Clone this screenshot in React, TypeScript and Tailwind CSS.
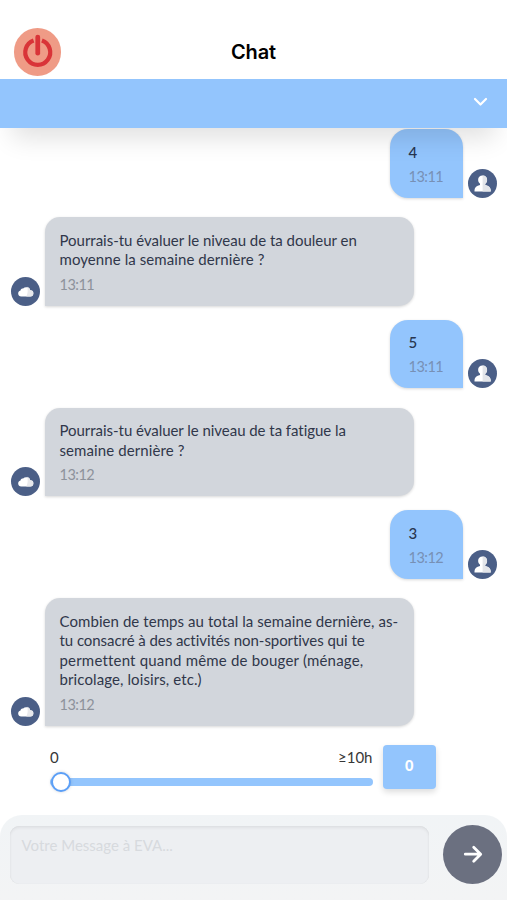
import type { ReactNode } from "react";

function Avatar({ children }: { children: ReactNode }) {
  return (
    <div className="h-[29px] w-[29px] shrink-0 rounded-full bg-[#4b5f87]">
      <svg viewBox="0 0 29 29" className="block h-full w-full">
        {children}
      </svg>
    </div>
  );
}

function BotMessage({ lines, time, spacing }: { lines: string[]; time: string; spacing: string[] }) {
  return (
    <div className="flex items-end gap-[5px] pl-[11px]">
      <Avatar>
        <path d="M10.2 19.5a3.1 3.1 0 0 1-.7-6.1c.3-1.2 1.3-1.9 2.6-1.8a4.2 4.2 0 0 1 7.2 1.6 3.15 3.15 0 0 1-.2 6.3z" fill="#fff" />
        <path d="M16.3 9.7a4.2 4.2 0 0 1 3 3.5 3.15 3.15 0 0 1-.2 6.3h-3.8q2.2-4.2 1-9.8z" fill="#e8e9ec" />
      </Avatar>
      <div className="w-[369px] rounded-t-[15px] rounded-br-[15px] bg-[#d2d6dc] pt-[13.5px] pb-[10.5px] pl-[14.5px] shadow-[0_1px_3px_rgba(0,0,0,0.16)]">
        {lines.map((line, i) => (
          <p key={line} className="text-[15px] leading-[19.5px] whitespace-nowrap text-[#30374a] [font-variant-ligatures:none]" style={{ letterSpacing: spacing[i] }}>
            {line}
          </p>
        ))}
        <p className="mt-[5px] text-[14.5px] leading-[20.5px] tracking-[-0.5px] text-[#8d929b]">{time}</p>
      </div>
    </div>
  );
}

function UserMessage({ text, time }: { text: string; time: string }) {
  return (
    <div className="flex items-end justify-end gap-[5px] pr-[10px]">
      <div className="h-[68.5px] w-[73.5px] rounded-t-[18px] rounded-bl-[18px] bg-[#93c5fd] pt-[12.5px] pl-[19px] shadow-[0_1px_3px_rgba(0,0,0,0.16)]">
        <p className="text-[15px] leading-[20px] font-medium text-[#28364f]">{text}</p>
        <p className="mt-[5px] text-[14.5px] leading-[20.5px] tracking-[-0.5px] text-[#7790b5]">{time}</p>
      </div>
      <Avatar>
        <path d="M14.6 6.5c2.8 0 4.5 1.8 4.5 4.4 0 1.6-.8 3-1.9 3.9v1.1c3.4.8 5.3 2.3 5.5 5.2v1.3H6.5v-1.3c.2-2.9 2.1-4.4 5.5-5.2v-1.1a5 5 0 0 1-1.9-3.9c0-2.6 1.7-4.4 4.5-4.4z" fill="#fff" />
        <path d="M14.6 6.5c2.8 0 4.5 1.8 4.5 4.4 0 1.6-.8 3-1.9 3.9v1.1c3.4.8 5.3 2.3 5.5 5.2v1.3h-8.1z" fill="#e3e5e9" />
      </Avatar>
    </div>
  );
}

export default function App() {
  return (
    <div className="flex h-[900px] w-[507px] flex-col overflow-hidden bg-white font-['Lato',sans-serif]">
      <header className="relative z-10 shrink-0 shadow-[0_22px_24px_-12px_rgba(0,0,0,0.12)]">
        <div className="grid h-[79px] grid-cols-3 bg-white pt-[28px]">
          <button className="ml-[13.5px] h-[47.5px] w-[47.5px] rounded-full bg-[#ef9b86]" aria-label="Quitter">
            <svg viewBox="0 0 48 48" className="h-full w-full" fill="none" stroke="#d93438">
              <path d="M19.8 12.7A12.6 12.6 0 1 0 28.2 12.7" strokeWidth="4.3" />
              <path d="M24 9.2v16.2" strokeWidth="4.8" strokeLinecap="round" />
            </svg>
          </button>
          <h1 className="h-[48px] text-center font-['Inter',sans-serif] text-[20px] leading-[48px] font-semibold tracking-[-0.1px] text-black">Chat</h1>
        </div>
        <div className="flex h-[49px] justify-end bg-[#93c5fd] pt-[18px] pr-[19px]">
          <svg viewBox="0 0 15 10" className="h-[10px] w-[15px]" fill="none" stroke="#fff" strokeWidth="2.2">
            <path d="M2 2 7.5 7.5 13 2" strokeLinecap="round" strokeLinejoin="round" />
          </svg>
        </div>
      </header>

      <main className="flex flex-1 flex-col pt-[1px]">
        <UserMessage text="4" time="13:11" />
        <div className="h-[19.5px] shrink-0" />
        <BotMessage
          lines={["Pourrais-tu évaluer le niveau de ta douleur en", "moyenne la semaine dernière ?"]}
          time="13:11"
          spacing={["-0.02px", "0.08px"]}
        />
        <div className="h-[14px] shrink-0" />
        <UserMessage text="5" time="13:11" />
        <div className="h-[19.5px] shrink-0" />
        <BotMessage
          lines={["Pourrais-tu évaluer le niveau de ta fatigue la", "semaine dernière ?"]}
          time="13:12"
          spacing={["-0.04px", "0.1px"]}
        />
        <div className="h-[14px] shrink-0" />
        <UserMessage text="3" time="13:12" />
        <div className="h-[19.5px] shrink-0" />
        <BotMessage
          lines={[
            "Combien de temps au total la semaine dernière, as-",
            "tu consacré à des activités non-sportives qui te",
            "permettent quand même de bouger (ménage,",
            "bricolage, loisirs, etc.)",
          ]}
          time="13:12"
          spacing={["0.07px", "-0.06px", "0.19px", "0.1px"]}
        />

        <div className="mt-[19px] flex gap-[10px] pl-[50px]">
          <div className="w-[322.5px]">
            <div className="flex h-[24px] justify-between text-[15px] leading-[24px] text-[#373737]">
              <span>0</span>
              <span>≥10h</span>
            </div>
            <div className="mt-[9px] flex h-[8px] items-center rounded-full bg-[#93c5fd]">
              <div className="ml-[0.5px] h-[20px] w-[20px] shrink-0 rounded-full border-2 border-[#5b9ff7] bg-white shadow-[0_0_3px_rgba(80,100,130,0.3)]" />
            </div>
          </div>
          <button className="h-[44.5px] w-[53.5px] rounded-[4px] bg-[#93c5fd] pb-[2px] text-[14.5px] font-black text-white shadow-[0_3px_6px_rgba(0,0,0,0.14)]">
            0
          </button>
        </div>
      </main>

      <footer className="flex h-[85px] shrink-0 gap-[14px] rounded-t-[22px] bg-gradient-to-b from-[#f1f4f6] to-[#f3f4f5] pt-[11px] pl-[10px]">
        <div className="h-[58px] w-[419px] rounded-[9px] bg-[#edeff2] px-[11.5px] pt-[8px] text-[15px] leading-[22px] text-[#d7dade] shadow-[inset_0_2px_3px_rgba(0,0,0,0.06),inset_0_0_1px_rgba(0,0,0,0.1)]">
          Votre Message à EVA...
        </div>
        <button className="-mt-px flex h-[59px] w-[59px] items-center justify-center rounded-full bg-[#6b7080]" aria-label="Envoyer">
          <svg viewBox="0 0 20 20" className="h-[20px] w-[20px]" fill="none" stroke="#fff" strokeWidth="2.8" strokeLinecap="round" strokeLinejoin="round">
            <path d="M2.3 9.2h15M10.7 2.2l7 7-7 7" />
          </svg>
        </button>
      </footer>
    </div>
  );
}
